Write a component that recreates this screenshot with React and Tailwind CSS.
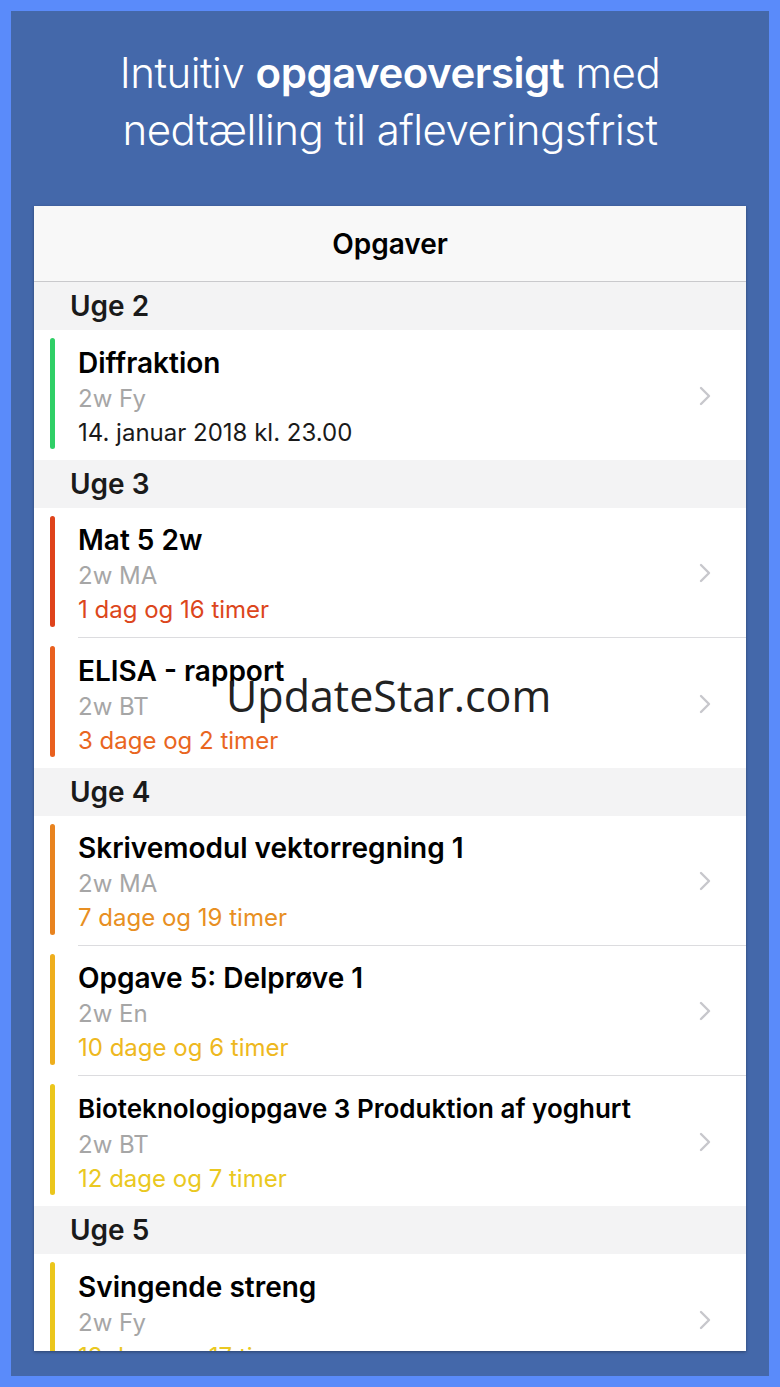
const sections = [
  {
    week: "Uge 2",
    tasks: [
      { title: "Diffraktion", team: "2w Fy", due: "14. januar 2018 kl. 23.00", bar: "bg-[#2fcf66]", text: "text-[#1a1a1a]" },
    ],
  },
  {
    week: "Uge 3",
    tasks: [
      { title: "Mat 5 2w", team: "2w MA", due: "1 dag og 16 timer", bar: "bg-[#df431b]", text: "text-[#dc461c]" },
      { title: "ELISA - rapport", team: "2w BT", due: "3 dage og 2 timer", bar: "bg-[#e9601f]", text: "text-[#e9661f]" },
    ],
  },
  {
    week: "Uge 4",
    tasks: [
      { title: "Skrivemodul vektorregning 1", team: "2w MA", due: "7 dage og 19 timer", bar: "bg-[#e8831f]", text: "text-[#e88f22]" },
      { title: "Opgave 5: Delprøve 1", team: "2w En", due: "10 dage og 6 timer", bar: "bg-[#eeae1d]", text: "text-[#eeb820]" },
      { title: "Bioteknologiopgave 3 Produktion af yoghurt", team: "2w BT", due: "12 dage og 7 timer", bar: "bg-[#ebc61c]", text: "text-[#eac821]", small: true },
    ],
  },
  {
    week: "Uge 5",
    tasks: [
      { title: "Svingende streng", team: "2w Fy", due: "13 dage og 17 timer", bar: "bg-[#ebc61c]", text: "text-[#eac821]" },
    ],
  },
];

const Chevron = () => (
  <svg width="14" height="22" viewBox="0 0 14 22" fill="none">
    <path d="M3 3l8 8-8 8" stroke="#c7c7cc" strokeWidth="2.4" strokeLinecap="round" strokeLinejoin="round" />
  </svg>
);

const TaskRow = ({ task, last }) => (
  <div className="relative flex h-[130px] bg-white">
    <div className="flex w-[44px] shrink-0 justify-start pl-[16px] pt-[8px] pb-[11px]">
      <div className={`w-[5px] rounded-full ${task.bar}`}></div>
    </div>
    <div className={`flex flex-1 items-center ${last ? "" : "border-b border-[#dcdcdf]"}`}>
      <div className="flex-1 pt-[6px]">
        <div className={`${task.small ? "text-[26px]" : "text-[28px]"} leading-[32px] font-semibold text-black`}>{task.title}</div>
        <div className="mt-[3px] text-[24px] leading-[34px] text-[#a6a6a6]">{task.team}</div>
        <div className={`text-[24px] leading-[34px] ${task.text}`}>{task.due}</div>
      </div>
      <div className="pr-[34px] pt-[1px]">
        <Chevron />
      </div>
    </div>
  </div>
);

export default function App() {
  return (
    <div className="h-[1387px] w-[780px] bg-[#5a8bfa] p-[11px]" style={{ fontFamily: "Inter, 'Noto Sans', sans-serif" }}>
      <div className="flex h-full flex-col bg-[#4468aa]">
        <h1 className="pt-[33px] text-center text-[42px] leading-[57px] font-light tracking-[-0.5px] text-white">
          Intuitiv <span className="font-semibold">opgaveoversigt</span> med
          <br />
          nedtælling til afleveringsfrist
        </h1>
        <div className="relative mx-[23px] mt-[48px] h-[1145px] overflow-hidden bg-white shadow-[0_1px_3px_rgba(0,0,0,0.35)]">
          <div className="flex h-[76px] items-center justify-center border-b border-[#c9c9cc] bg-[#f8f8f8] text-[28px] font-semibold text-black">
            Opgaver
          </div>
          {sections.map((s) => (
            <div key={s.week}>
              <div className="flex h-[48px] items-center bg-[#f3f3f4] pl-[36px] text-[28px] font-semibold text-[#1a1a1a]">
                {s.week}
              </div>
              {s.tasks.map((t, i) => (
                <TaskRow key={t.title} task={t} last={i === s.tasks.length - 1} />
              ))}
            </div>
          ))}
          <div
            className="absolute left-[192px] top-[462px] text-[43px] leading-[56px] text-[#222222]"
            style={{ fontFamily: "'Open Sans', sans-serif" }}
          >
            UpdateStar.com
          </div>
        </div>
      </div>
    </div>
  );
}
